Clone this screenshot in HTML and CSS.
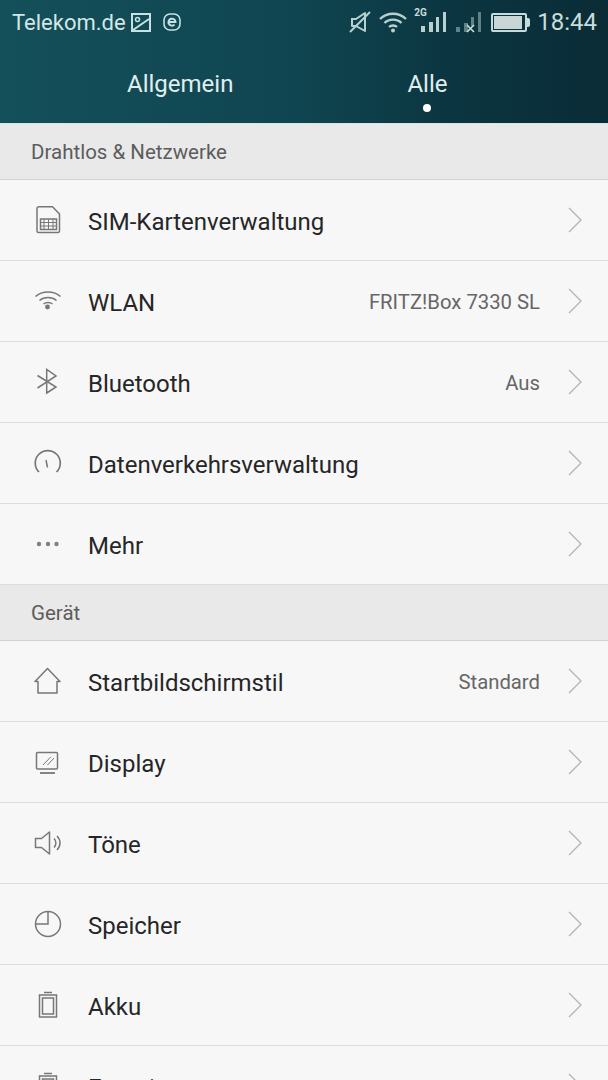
FILE: index.html
```html
<!DOCTYPE html>
<html lang="en">

<head>
    <meta charset="UTF-8">
    <meta name="viewport" content="width=device-width, initial-scale=1.0">
    <title>Einstellungen</title>
    <link rel="stylesheet" href="styles.css">
</head>

<body>
    <div class="screen">
        <header class="top">
            <div class="status">
                <span class="carrier">Telekom.de</span>
                <svg class="st-icon pic" width="22" height="21" viewBox="0 0 22 21" fill="none" stroke="#c6e2e2" stroke-width="2">
                    <rect x="2" y="2" width="18" height="17" />
                    <path d="M3 18 L19 7" />
                    <circle cx="7.5" cy="7.5" r="2" stroke-width="1.5" />
                </svg>
                <svg class="st-icon e" width="20" height="20" viewBox="0 0 20 20" fill="none" stroke="#c6e2e2">
                    <rect x="2" y="2" width="16" height="16" rx="6" stroke-width="1.6" />
                    <path d="M6.5 10 H13.5 A3.5 3.5 0 1 0 12.5 12.6" stroke-width="2" />
                </svg>
                <div class="status-right">
                    <svg width="22" height="22" viewBox="0 0 22 22" fill="none" stroke="#b9d0d0" stroke-width="2">
                        <path d="M2 8 H7 L16 2 V20 L7 15 H3 V8" stroke-linejoin="round" />
                        <path d="M1 21 L21 1" />
                    </svg>
                    <svg class="wifi" width="30" height="22" viewBox="0 0 30 22" fill="none" stroke="#b9d0d0" stroke-width="2.4">
                        <path d="M2 8 C9 1 21 1 28 8" />
                        <path d="M6.5 12 C11 7.5 19 7.5 23.5 12" />
                        <path d="M11 16 C13 14 17 14 19 16" />
                        <circle cx="15" cy="19.5" r="2" fill="#b9d0d0" stroke="none" />
                    </svg>
                    <div class="signal">
                        <span class="tag">2G</span>
                        <svg width="26" height="22" viewBox="0 0 26 22" fill="#b9d0d0">
                            <rect x="0" y="15" width="4" height="6" />
                            <rect x="8" y="11" width="4" height="10" />
                            <rect x="15" y="6" width="3" height="15" />
                            <rect x="22" y="1" width="3" height="20" />
                        </svg>
                    </div>
                    <svg class="sim2" width="26" height="22" viewBox="0 0 26 22" fill="#5f8385">
                        <rect x="0" y="16" width="4" height="5" />
                        <rect x="8" y="12" width="4" height="9" />
                        <rect x="15" y="6" width="3" height="9" />
                        <rect x="22" y="1" width="3" height="20" />
                        <path d="M11 14 L18 21 M18 14 L11 21" stroke="#cfe0e0" stroke-width="1.6" />
                    </svg>
                    <div class="battery"><span class="charge"></span></div>
                    <span class="clock">18:44</span>
                </div>
            </div>
            <nav class="tabs">
                <span class="tab">Allgemein</span>
                <span class="tab active">Alle</span>
            </nav>
        </header>

        <div class="section">Drahtlos &amp; Netzwerke</div>
        <ul class="list">
            <li class="row">
                <svg class="ico" width="32" height="32" viewBox="0 0 32 32" fill="none" stroke="#777" stroke-width="1.5">
                    <path d="M5 4.500 Q5 2.800 7 2.800 H20.500 L27.500 10 V27 Q27.500 28.500 26 28.500 H6.500 Q5 28.500 5 27 Z" />
                    <rect x="8.500" y="15" width="16" height="10.500" />
                    <path d="M8.500 18.500 H24.500 M8.500 22 H24.500 M12 15 V25.500 M16.500 15 V25.500 M21 15 V25.500" stroke-width="1" />
                </svg>
                <span class="name">SIM-Kartenverwaltung</span>
                <svg class="chev" width="16" height="26" viewBox="0 0 16 26" fill="none" stroke="#b3b3b3" stroke-width="1.3"><path d="M2 1 L14 13 L2 25" /></svg>
            </li>
            <li class="row">
                <svg class="ico" width="32" height="32" viewBox="0 0 32 32" fill="none" stroke="#777" stroke-width="1.5">
                    <path d="M3.500 11.500 C10 5.500 22 5.500 28.500 11.500" />
                    <path d="M7.500 15.500 C12 11.500 20 11.500 24.500 15.500" />
                    <path d="M11.500 19 C14 17 18 17 20.500 19" />
                    <circle cx="15.500" cy="22" r="2.400" fill="#777" stroke="none" />
                </svg>
                <span class="name">WLAN</span>
                <span class="value">FRITZ!Box 7330 SL</span>
                <svg class="chev" width="16" height="26" viewBox="0 0 16 26" fill="none" stroke="#b3b3b3" stroke-width="1.3"><path d="M2 1 L14 13 L2 25" /></svg>
            </li>
            <li class="row">
                <svg class="ico" width="32" height="32" viewBox="0 0 32 32" fill="none" stroke="#777" stroke-width="1.5">
                    <path d="M5.500 9.500 L24 21 L14.700 27 V3.500 L24 10 L5.500 22" />
                </svg>
                <span class="name">Bluetooth</span>
                <span class="value">Aus</span>
                <svg class="chev" width="16" height="26" viewBox="0 0 16 26" fill="none" stroke="#b3b3b3" stroke-width="1.3"><path d="M2 1 L14 13 L2 25" /></svg>
            </li>
            <li class="row">
                <svg class="ico" width="32" height="32" viewBox="0 0 32 32" fill="none" stroke="#777" stroke-width="1.500">
                    <path d="M7 25 A12.500 12.500 0 1 1 24.500 25" stroke-width="1.700" />
                    <path d="M14 13 L15.500 20.500" />
                </svg>
                <span class="name">Datenverkehrsverwaltung</span>
                <svg class="chev" width="16" height="26" viewBox="0 0 16 26" fill="none" stroke="#b3b3b3" stroke-width="1.3"><path d="M2 1 L14 13 L2 25" /></svg>
            </li>
            <li class="row">
                <svg class="ico" width="32" height="32" viewBox="0 0 32 32" fill="#808080">
                    <circle cx="7" cy="16" r="2.200" />
                    <circle cx="16" cy="16" r="2.200" />
                    <circle cx="24.500" cy="16" r="2.200" />
                </svg>
                <span class="name">Mehr</span>
                <svg class="chev" width="16" height="26" viewBox="0 0 16 26" fill="none" stroke="#b3b3b3" stroke-width="1.3"><path d="M2 1 L14 13 L2 25" /></svg>
            </li>
        </ul>

        <div class="section">Gerät</div>
        <ul class="list">
            <li class="row">
                <svg class="ico" width="32" height="32" viewBox="0 0 32 32" fill="none" stroke="#777" stroke-width="1.500">
                    <path d="M3 16.500 L15.500 3.500 L28 16.500 H25 V28 H6 V16.500 Z" stroke-linejoin="round" />
                </svg>
                <span class="name">Startbildschirmstil</span>
                <span class="value">Standard</span>
                <svg class="chev" width="16" height="26" viewBox="0 0 16 26" fill="none" stroke="#b3b3b3" stroke-width="1.3"><path d="M2 1 L14 13 L2 25" /></svg>
            </li>
            <li class="row">
                <svg class="ico" width="32" height="32" viewBox="0 0 32 32" fill="none" stroke="#777" stroke-width="1.500">
                    <rect x="4.500" y="6.500" width="21" height="16.500" rx="1" />
                    <path d="M11 19 L19 10.700 M15.500 19 L22 12" stroke-width="1" />
                    <path d="M8 27 H23" stroke-width="1.800" />
                </svg>
                <span class="name">Display</span>
                <svg class="chev" width="16" height="26" viewBox="0 0 16 26" fill="none" stroke="#b3b3b3" stroke-width="1.3"><path d="M2 1 L14 13 L2 25" /></svg>
            </li>
            <li class="row">
                <svg class="ico" width="32" height="32" viewBox="0 0 32 32" fill="none" stroke="#777" stroke-width="1.500">
                    <path d="M3.500 11.500 H9.500 L17.500 5 V27 L9.500 20.500 H3.500 Z" stroke-linejoin="round" />
                    <path d="M22 11.500 C24.500 14 24.500 18 22 20.500" />
                    <path d="M25 9 C29 13 29 19 25 23" />
                </svg>
                <span class="name">Töne</span>
                <svg class="chev" width="16" height="26" viewBox="0 0 16 26" fill="none" stroke="#b3b3b3" stroke-width="1.3"><path d="M2 1 L14 13 L2 25" /></svg>
            </li>
            <li class="row">
                <svg class="ico" width="32" height="32" viewBox="0 0 32 32" fill="none" stroke="#777" stroke-width="1.500">
                    <circle cx="16" cy="16" r="12.500" />
                    <path d="M16 3.500 V16 H3.500" />
                </svg>
                <span class="name">Speicher</span>
                <svg class="chev" width="16" height="26" viewBox="0 0 16 26" fill="none" stroke="#b3b3b3" stroke-width="1.3"><path d="M2 1 L14 13 L2 25" /></svg>
            </li>
            <li class="row">
                <svg class="ico" width="32" height="32" viewBox="0 0 32 32" fill="none" stroke="#777" stroke-width="1.500">
                    <rect x="7.500" y="6" width="17" height="22" />
                    <rect x="10.500" y="9" width="11" height="16" />
                    <path d="M12 3.500 H20" />
                </svg>
                <span class="name">Akku</span>
                <svg class="chev" width="16" height="26" viewBox="0 0 16 26" fill="none" stroke="#b3b3b3" stroke-width="1.3"><path d="M2 1 L14 13 L2 25" /></svg>
            </li>
            <li class="row">
                <svg class="ico" width="32" height="32" viewBox="0 0 32 32" fill="none" stroke="#777" stroke-width="1.500">
                    <rect x="7.500" y="6" width="17" height="22" />
                    <rect x="10.500" y="9" width="11" height="16" />
                    <path d="M12 3.500 H20" />
                </svg>
                <span class="name">Energie</span>
                <svg class="chev" width="16" height="26" viewBox="0 0 16 26" fill="none" stroke="#b3b3b3" stroke-width="1.3"><path d="M2 1 L14 13 L2 25" /></svg>
            </li>
        </ul>
    </div>
</body>

</html>
```

FILE: styles.css
```css
body {
    margin: 0;
    padding: 0;
    background-color: #f7f7f7;
    font-family: Roboto, "Noto Sans", Arial, sans-serif;
}

.screen {
    width: 608px;
    height: 1080px;
    overflow: hidden;
}

/* top bar */
.top {
    height: 123px;
    background: linear-gradient(90deg, #14505a 0%, #0f4550 50%, #0b3540 75%, #0a2c37 100%);
    border-bottom: 1px solid #d6e6e6;
}

.status {
    display: flex;
    align-items: center;
    height: 44px;
    padding: 0 11px 0 12px;
}

.carrier {
    font-size: 22px;
    color: #d4e6e6;
}

.st-icon.pic {
    margin-left: 4px;
}

.st-icon.e {
    margin-left: 10px;
}

.status-right {
    display: flex;
    align-items: center;
    margin-left: auto;
}

.status-right svg {
    display: block;
}

.wifi {
    margin-left: 7px;
}

.signal {
    position: relative;
    margin-left: 13px;
}

.tag {
    position: absolute;
    left: -7px;
    top: -4px;
    font-size: 10px;
    font-weight: bold;
    color: #c6dcdc;
}

.sim2 {
    margin-left: 9px;
}

.battery {
    position: relative;
    width: 36px;
    height: 19px;
    margin-left: 9px;
    margin-right: 10px;
    border: 2px solid #c6dcdc;
    border-radius: 2px;
    box-sizing: border-box;
    padding: 1px;
}

.battery::after {
    content: "";
    position: absolute;
    right: -5px;
    top: 3px;
    width: 3px;
    height: 9px;
    background-color: #c6dcdc;
    border-radius: 0 2px 2px 0;
}

.charge {
    display: block;
    width: 28px;
    height: 100%;
    background-color: #c9d6d6;
}

.clock {
    font-size: 24px;
    color: #c9dcdc;
}

.tabs {
    display: flex;
    height: 79px;
    padding-left: 127px;
    gap: 174px;
}

.tab {
    position: relative;
    margin-top: 25px;
    font-size: 24px;
    line-height: 30px;
    color: #e0eeee;
    height: 30px;
}

.tab.active::after {
    content: "";
    position: absolute;
    left: 50%;
    top: 35px;
    width: 8px;
    height: 8px;
    margin-left: -4px;
    border-radius: 50%;
    background-color: #fff;
}

/* list */
.section {
    height: 55px;
    padding-left: 31px;
    line-height: 56px;
    font-size: 20.5px;
    color: #5c5c5c;
    background-color: #e9e9e9;
    border-bottom: 1px solid #d2d2d2;
}

.list {
    list-style: none;
    margin: 0;
    padding: 0;
}

.row {
    display: flex;
    align-items: center;
    height: 80px;
    padding: 0 25px 0 32px;
    border-bottom: 1px solid #dcdcdc;
    background-color: #f7f7f7;
}

.ico {
    flex: none;
    margin-right: 24px;
}

.name {
    padding-top: 4px;
    font-size: 24px;
    color: #262626;
}

.value {
    margin-left: auto;
    padding-top: 2px;
    font-size: 20.3px;
    color: #666;
}

.chev {
    flex: none;
    margin-left: 27px;
}

.row .name + .chev {
    margin-left: auto;
}
```
